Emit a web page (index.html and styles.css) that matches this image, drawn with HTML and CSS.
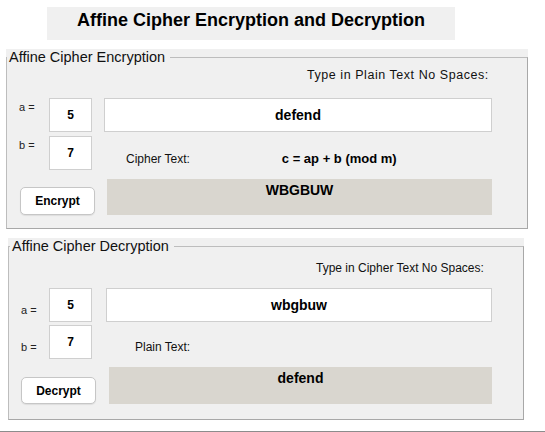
FILE: index.html
```html
<!DOCTYPE html>
<html>
<head>
<meta charset="utf-8">
<link rel="stylesheet" href="styles.css">
</head>
<body>
<div class="title">Affine Cipher Encryption and Decryption</div>

<div class="panel enc">
  <fieldset class="frame">
    <legend>Affine Cipher Encryption</legend>
    <div class="hint">Type in Plain Text No Spaces:</div>
    <div class="row row-a">
      <span class="lbl">a =</span>
      <div class="num">5</div>
      <div class="text-in">defend</div>
    </div>
    <div class="row row-b">
      <span class="lbl">b =</span>
      <div class="num">7</div>
      <span class="out-lbl">Cipher Text:</span>
      <span class="formula">c = ap + b (mod m)</span>
    </div>
    <div class="row row-c">
      <button class="btn">Encrypt</button>
      <div class="out">WBGBUW</div>
    </div>
  </fieldset>
</div>

<div class="panel dec">
  <fieldset class="frame">
    <legend>Affine Cipher Decryption</legend>
    <div class="hint">Type in Cipher Text No Spaces:</div>
    <div class="row row-a">
      <span class="lbl">a =</span>
      <div class="num">5</div>
      <div class="text-in">wbgbuw</div>
    </div>
    <div class="row row-b">
      <span class="lbl">b =</span>
      <div class="num">7</div>
      <span class="out-lbl">Plain Text:</span>
    </div>
    <div class="row row-c">
      <button class="btn">Decrypt</button>
      <div class="out">defend</div>
    </div>
  </fieldset>
</div>

<div class="footer"></div>
</body>
</html>
```

FILE: styles.css
```css
html, body {
  margin: 0;
  padding: 0;
  background: #ffffff;
}
body {
  font-family: "Liberation Sans", Arial, Helvetica, sans-serif;
  color: #000;
  width: 545px;
  height: 432px;
  overflow: hidden;
}

.title {
  margin: 7px 0 0 47px;
  width: 408px;
  height: 33px;
  line-height: 27px;
  background: #f0f0f0;
  font-size: 18px;
  font-weight: bold;
  text-align: center;
}

.panel {
  background: #f0f0f0;
}
.enc {
  margin: 9px 0 0 6px;
  width: 522px;
}
.dec {
  margin: 9px 0 0 8px;
  width: 516px;
}

.frame {
  margin: 0;
  padding: 0;
  min-width: 0;
  border: 1px solid #bdbdbd;
  border-right-color: #a8a8a8;
  border-bottom-color: #a8a8a8;
}
.frame legend {
  padding: 0 5px 0 2px;
  margin: 0;
  font-size: 14.5px;
  line-height: 17px;
  color: #111;
}
.dec .frame legend {
  margin-left: 1px;
}

.hint {
  font-size: 12px;
  line-height: 16px;
  color: #111;
  white-space: nowrap;
}
.enc .hint {
  margin: 1px 0 0 300px;
  font-size: 12.5px;
  letter-spacing: 0.55px;
}
.dec .hint {
  margin: 5px 0 0 307px;
}

.row {
  display: flex;
  align-items: flex-start;
}

.lbl {
  font-size: 11px;
  line-height: 13px;
  color: #222;
  box-sizing: border-box;
  padding-left: 12px;
  white-space: nowrap;
}
.enc .lbl { width: 42px; }
.dec .lbl { width: 40px; }

.num, .text-in {
  box-sizing: border-box;
  height: 34px;
  background: #fff;
  border: 1px solid #cfcfcf;
  display: flex;
  align-items: center;
  justify-content: center;
  font-weight: bold;
}
.num {
  width: 43px;
  font-size: 12px;
}
.text-in {
  font-size: 14px;
}

.enc .row-a { margin-top: 15px; }
.enc .row-a .lbl { margin-top: 3px; }
.enc .text-in { margin-left: 12px; width: 388px; }

.enc .row-b { margin-top: 4px; }
.enc .row-b .lbl { margin-top: 3px; }
.out-lbl {
  font-size: 12px;
  line-height: 14px;
  color: #111;
  white-space: nowrap;
}
.enc .out-lbl { margin: 16px 0 0 34px; }
.formula {
  font-size: 13px;
  line-height: 14px;
  font-weight: bold;
  margin: 16px 0 0 92px;
  white-space: nowrap;
}

.row-c {
  align-items: flex-end;
}
.btn {
  box-sizing: border-box;
  width: 75px;
  padding: 0;
  background: #fff;
  border: 1px solid #c6c6c6;
  border-radius: 5px;
  box-shadow: 0 1px 1px rgba(0, 0, 0, 0.08);
  font-family: "Liberation Sans", Arial, Helvetica, sans-serif;
  font-size: 12px;
  font-weight: bold;
  color: #000;
}
.out {
  box-sizing: border-box;
  background: #d9d6cf;
  text-align: center;
  font-size: 14px;
  font-weight: bold;
  line-height: 16px;
  padding-top: 3px;
}

.enc .row-c { margin-top: 9px; }
.enc .btn { margin-left: 13px; height: 28px; }
.enc .out { margin-left: 12px; width: 385px; height: 36px; }
.enc .frame { padding-bottom: 13px; }

.dec .row-a { margin-top: 12px; }
.dec .row-a .lbl { margin-top: 16px; }
.dec .text-in { margin-left: 14px; width: 386px; }
.dec .row-b { margin-top: 3px; }
.dec .row-b .lbl { margin-top: 16px; }
.dec .out-lbl { margin: 15px 0 0 43px; }

.dec .row-c { margin-top: 8px; }
.dec .btn { margin-left: 12px; height: 27px; }
.dec .out { margin-left: 13px; width: 383px; height: 37px; }
.dec .frame { padding-bottom: 15px; }

.footer {
  margin-top: 11px;
  height: 1px;
  background: #8c8c8c;
}
```
